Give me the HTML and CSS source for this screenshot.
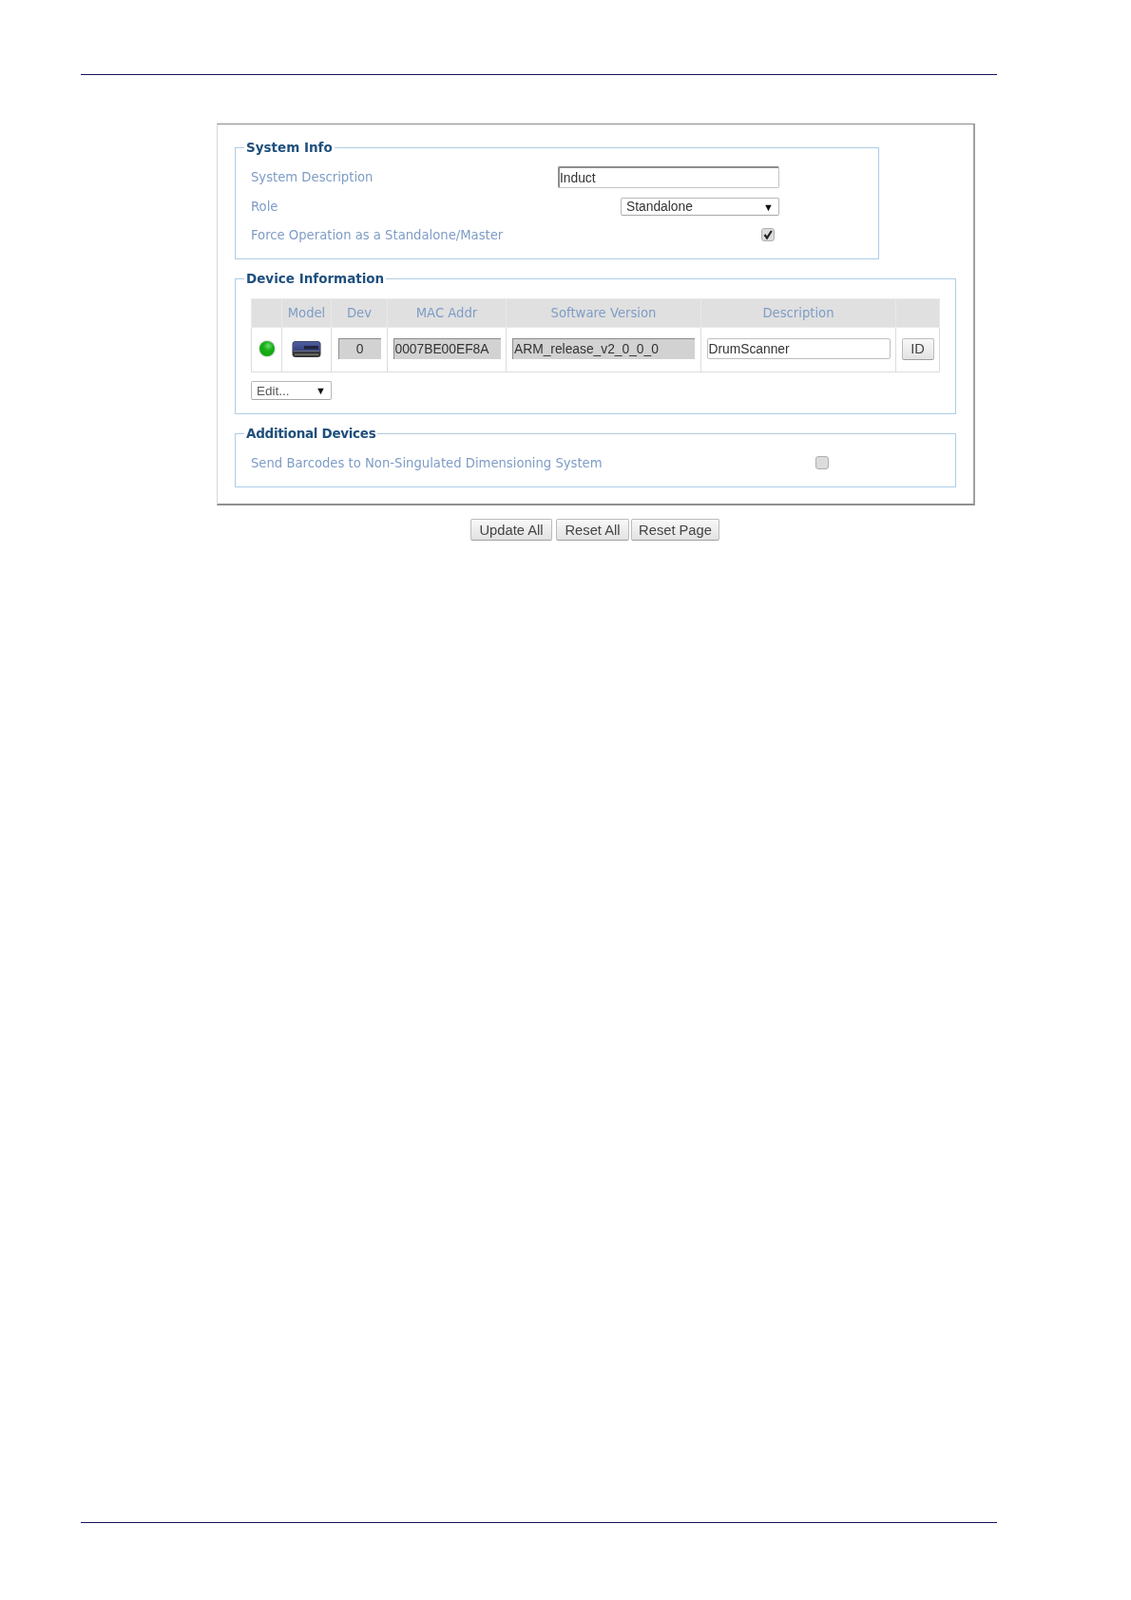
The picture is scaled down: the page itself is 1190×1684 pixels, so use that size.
FILE: index.html
```html
<!DOCTYPE html>
<html lang="en">
  <head>
    <meta charset="UTF-8" />
    <meta name="viewport" content="width=device-width, initial-scale=1.0" />
    <title>System Info</title>
    <link rel="stylesheet" href="styles.css">
  </head>
  <body>
    <div class="page">
      <hr class="rule" />

      <div class="content">
        <div class="panel">
          <fieldset class="group group-system">
            <legend>System Info</legend>
            <div class="row row-desc">
              <label>System Description</label>
              <input type="text" class="sunken sys-desc" value="Induct" />
            </div>
            <div class="row row-role">
              <label>Role</label>
              <div class="select role-select"><span>Standalone</span><span class="arrow">▼</span></div>
            </div>
            <div class="row row-force">
              <label>Force Operation as a Standalone/Master</label>
              <span class="check checked">
                <svg viewBox="0 0 12 12" width="12" height="12"><path d="M2.5 6 L5 9.5 L9.8 2" fill="none" stroke="#222" stroke-width="2.2" /></svg>
              </span>
            </div>
          </fieldset>

          <fieldset class="group group-device">
            <legend>Device Information</legend>
            <table class="devices">
              <tr>
                <th class="col-led"></th>
                <th class="col-model">Model</th>
                <th class="col-dev">Dev</th>
                <th class="col-mac">MAC Addr</th>
                <th class="col-soft">Software Version</th>
                <th class="col-text">Description</th>
                <th class="col-id"></th>
              </tr>
              <tr>
                <td><span class="led"></span></td>
                <td>
                  <svg class="model" viewBox="0 0 31 19" width="31" height="19">
                    <defs>
                      <linearGradient id="modelTop" x1="0" y1="0" x2="0" y2="1">
                        <stop offset="0" stop-color="#4f5da0" />
                        <stop offset="1" stop-color="#343f7c" />
                      </linearGradient>
                    </defs>
                    <rect x="0.5" y="1" width="30" height="17" rx="3.5" fill="#33363c" />
                    <path d="M1 12 V5 Q1 1.5 4.5 1.5 H26.5 Q30 1.5 30 5 V12 Z" fill="url(#modelTop)" />
                    <rect x="13" y="6" width="15" height="3.5" fill="#20243a" />
                    <rect x="2" y="11" width="27" height="1" fill="#6a7088" />
                    <rect x="3" y="14.5" width="25" height="1.5" fill="#77745a" />
                  </svg>
                </td>
                <td><input type="text" class="readonly dev-input" value="0" readonly /></td>
                <td><input type="text" class="readonly mac-input" value="0007BE00EF8A" readonly /></td>
                <td><input type="text" class="readonly soft-input" value="ARM_release_v2_0_0_0" readonly /></td>
                <td><input type="text" class="plain text-input" value="DrumScanner" /></td>
                <td><button class="btn id-btn">ID</button></td>
              </tr>
            </table>
            <div class="select edit-select"><span>Edit...</span><span class="arrow">▼</span></div>
          </fieldset>

          <fieldset class="group group-extra">
            <legend>Additional Devices</legend>
            <div class="row row-send">
              <label>Send Barcodes to Non-Singulated Dimensioning System</label>
              <span class="check"></span>
            </div>
          </fieldset>
        </div>

        <div class="actions">
          <button class="btn btn-update">Update All</button>
          <button class="btn btn-reset">Reset All</button>
          <button class="btn btn-page">Reset Page</button>
        </div>
      </div>

      <hr class="rule rule-bottom" />
    </div>
  </body>
</html>
```

FILE: styles.css
```css
* {
  box-sizing: border-box;
}
body {
  margin: 0;
  background-color: #fff;
  font-family: "Liberation Sans", Arial, sans-serif;
}
.page {
  width: 1190px;
  height: 1684px;
  padding: 78px 141px 0 85px;
}
.rule {
  margin: 0;
  height: 1px;
  border: none;
  background-color: #14145a;
}
.rule-bottom {
  margin-top: 1033px;
}
.content {
  padding: 51px 0 0 143px;
  filter: blur(0.45px);
}

/* main white box */
.panel {
  width: 798px;
  height: 402px;
  padding: 16px 0 0 18px;
  border: 1px solid #d8d8d8;
  border-top-color: #8a8a8a;
  border-right: 2px solid #a0a0a0;
  border-bottom: 2px solid #909090;
}
.group {
  margin: 0 0 12px 0;
  padding: 0 16px;
  border: 1px solid #aecde6;
}
.group legend {
  margin-left: -7px;
  padding: 0 2px;
  font-family: "DejaVu Sans", Verdana, sans-serif;
  font-size: 13.5px;
  font-weight: bold;
  line-height: 16px;
  color: #1f4f7d;
}
.group-system {
  width: 678px;
  height: 126px;
}
.group-device {
  width: 759px;
  height: 151px;
  margin-bottom: 12px;
}
.group-extra {
  width: 759px;
  height: 65px;
  margin-bottom: 0;
}
.group-extra legend {
  letter-spacing: -0.3px;
}
.row {
  display: flex;
  align-items: center;
  justify-content: space-between;
  height: 23px;
}
.row label {
  font-family: "DejaVu Sans", Verdana, sans-serif;
  font-size: 13.2px;
  color: #7e9cc6;
}
.row-desc {
  margin-top: 12px;
  margin-right: 88px;
}
.row-role {
  margin-top: 10px;
  margin-right: 88px;
  height: 19px;
}
.row-force {
  margin-top: 12px;
  margin-right: 93px;
  height: 16px;
}
.row-send {
  margin-top: 14px;
  margin-right: 117px;
  height: 18px;
}

/* form controls */
input,
.select {
  font-family: "Liberation Sans", Arial, sans-serif;
  font-size: 13.8px;
  color: #333;
}
input {
  height: 22px;
  padding: 0 1px;
  outline: none;
}
.sunken {
  padding: 0;
  border: 1px solid #c4c4c4;
  border-top: 2px solid #8c8c8c;
  border-left: 2px solid #8c8c8c;
  border-radius: 2px;
}
.sys-desc {
  width: 233px;
  height: 23px;
}
.select {
  display: flex;
  align-items: center;
  justify-content: space-between;
  padding: 0 5px;
  border: 1px solid #b8b8b8;
  border-bottom-color: #a8a8a8;
  border-radius: 2px;
  background-color: #fff;
}
.arrow {
  font-size: 11px;
  color: #111;
}
.role-select {
  width: 167px;
  height: 19px;
}
.edit-select {
  width: 85px;
  height: 20px;
  margin-top: 9px;
  font-size: 13.5px;
  color: #555;
}
.check {
  display: flex;
  align-items: center;
  justify-content: center;
  width: 14px;
  height: 14px;
  border: 1px solid #b0b0b0;
  border-radius: 3px;
  background-color: #dcdcdc;
}

/* device table */
.devices {
  table-layout: fixed;
  width: 724px;
  margin-top: 13px;
  border-collapse: collapse;
}
.devices th,
.devices td {
  padding: 0;
  border: 1px solid #dcdcdc;
  text-align: center;
}
.devices th {
  height: 30px;
  background-color: #e0e0e0;
  border-color: #e9e9e9;
  font-family: "DejaVu Sans", Verdana, sans-serif;
  font-size: 13.2px;
  font-weight: normal;
  color: #7e9cc6;
}
.devices td {
  height: 47px;
  padding-bottom: 2px;
  vertical-align: middle;
}
.col-led {
  width: 32px;
}
.col-model {
  width: 52px;
}
.col-dev {
  width: 59px;
}
.col-mac {
  width: 125px;
}
.col-soft {
  width: 205px;
}
.col-text {
  width: 205px;
}
.col-id {
  width: 46px;
}
.led {
  display: block;
  width: 16px;
  height: 16px;
  margin: 0 auto;
  border-radius: 50%;
  background: radial-gradient(circle at 58% 32%, #6fdc6f 0, #18b018 35%, #0f9e0f 100%);
  box-shadow: 0 0 2px #888;
}
.model {
  display: block;
  margin: 0 auto;
}
.readonly {
  display: block;
  margin: 0 auto;
  background-color: #d2d2d2;
  border: none;
  border-top: 1px solid #8c8c8c;
  border-left: 1px solid #8c8c8c;
}
.dev-input {
  width: 45px;
  text-align: center;
}
.mac-input {
  width: 113px;
}
.soft-input {
  width: 192px;
}
.plain {
  display: block;
  margin: 0 auto;
  border: 1px solid #c0c0c0;
  border-radius: 2px;
}
.text-input {
  width: 193px;
}
.btn {
  height: 23px;
  padding: 0;
  border: 1px solid #bcbcbc;
  border-bottom-color: #a0a0a0;
  border-radius: 2px;
  background: linear-gradient(#f8f8f8, #e2e2e2);
  font-family: "Liberation Sans", Arial, sans-serif;
  font-size: 14.7px;
  color: #444;
}
.id-btn {
  display: block;
  width: 34px;
  margin: 0 auto;
}

/* buttons under the box */
.actions {
  display: flex;
  margin: 14px 0 0 267px;
}
.btn-update {
  width: 86px;
  margin-right: 4px;
}
.btn-reset {
  width: 77px;
  margin-right: 2px;
}
.btn-page {
  width: 93px;
}
```
